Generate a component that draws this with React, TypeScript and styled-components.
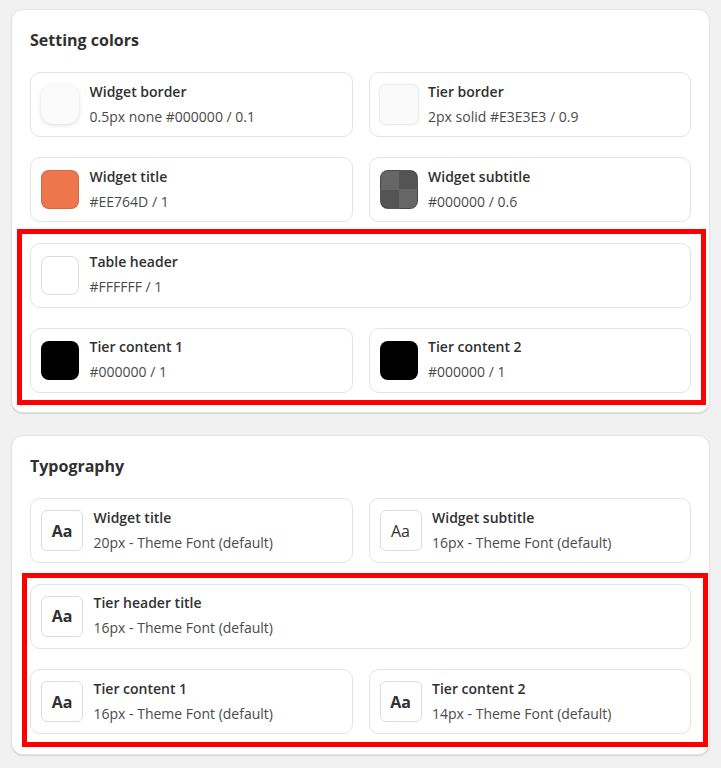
import React from "react";
import styled, { createGlobalStyle, css } from "styled-components";

const GlobalStyle = createGlobalStyle`
  html, body {
    margin: 0;
    padding: 0;
    background: #f1f1f1;
  }
  body {
    font-family: "Open Sans", "Noto Sans", "Liberation Sans", sans-serif;
    color: #303030;
    -webkit-font-smoothing: antialiased;
  }
`;

const Page = styled.div`
  display: flex;
  flex-direction: column;
  gap: 22px;
  padding: 9px 11px 15px;
`;

const Card = styled.section`
  position: relative;
  background: #ffffff;
  border: 1px solid #e3e3e3;
  border-radius: 12px;
  box-shadow: 0 1px 1px rgba(0, 0, 0, 0.12);
  padding: 18px 18px 19.5px;
`;

const CardTitle = styled.h2`
  margin: 0 0 20px;
  font-size: 16px;
  line-height: 24px;
  font-weight: 700;
  color: #303030;
`;

const Grid = styled.div`
  display: grid;
  grid-template-columns: 1fr 1fr;
  column-gap: 16px;
  row-gap: 20.33px;
`;

const Item = styled.div<{ $full?: boolean }>`
  grid-column: ${(p) => (p.$full ? "1 / -1" : "auto")};
  height: 65px;
  box-sizing: border-box;
  display: flex;
  align-items: center;
  gap: 10.5px;
  padding: 0 10px;
  border: 1px solid #e3e3e3;
  border-radius: 10px;
  background: #fff;
`;

type SwatchKind = "soft" | "ring" | "fill" | "checker" | "outline";

const Swatch = styled.div<{ $kind: SwatchKind; $color?: string }>`
  width: 38px;
  height: 39px;
  flex: none;
  box-sizing: border-box;
  border-radius: 8px;
  ${(p) =>
    p.$kind === "soft" &&
    css`
      border-radius: 12px;
      background: #fbfbfb;
      box-shadow: 0 1px 4px rgba(0, 0, 0, 0.14);
    `}
  ${(p) =>
    p.$kind === "ring" &&
    css`
      border-radius: 6px;
      background: #fafafa;
      box-shadow: 0 0 2px 1px rgba(0, 0, 0, 0.1);
    `}
  ${(p) =>
    p.$kind === "fill" &&
    css`
      background: ${p.$color};
      border: 1px solid rgba(0, 0, 0, 0.12);
    `}
  ${(p) =>
    p.$kind === "outline" &&
    css`
      background: ${p.$color};
      border: 1px solid #dcdcdc;
    `}
  ${(p) =>
    p.$kind === "checker" &&
    css`
      border: 1px solid rgba(0, 0, 0, 0.15);
      background: conic-gradient(
        #545454 0 25%,
        #666666 0 50%,
        #545454 0 75%,
        #666666 0 100%
      );
    `}
`;

const FontBox = styled.div<{ $bold: boolean }>`
  width: 42px;
  height: 41px;
  flex: none;
  box-sizing: border-box;
  border: 1px solid #dcdcdc;
  border-radius: 6px;
  display: flex;
  align-items: center;
  justify-content: center;
  font-size: 16px;
  font-weight: ${(p) => (p.$bold ? 700 : 400)};
  color: #303030;
`;

const Text = styled.div`
  display: flex;
  flex-direction: column;
  gap: 5px;
  margin-top: -1px;
  min-width: 0;
`;

const Label = styled.div`
  font-size: 14px;
  line-height: 20px;
  font-weight: 600;
  color: #303030;
  white-space: nowrap;
`;

const Value = styled.div`
  font-size: 14px;
  line-height: 20px;
  font-weight: 400;
  color: #4a4a4a;
  white-space: nowrap;
`;

const Highlight = styled.div<{ $top: number; $left: number; $right: number; $height: number }>`
  position: absolute;
  top: ${(p) => p.$top}px;
  left: ${(p) => p.$left}px;
  right: ${(p) => p.$right}px;
  height: ${(p) => p.$height}px;
  border: 5px solid #ff0000;
  box-sizing: border-box;
  pointer-events: none;
`;

const colors: {
  label: string;
  value: string;
  kind: SwatchKind;
  color?: string;
  full?: boolean;
}[] = [
  { label: "Widget border", value: "0.5px none #000000 / 0.1", kind: "soft" },
  { label: "Tier border", value: "2px solid #E3E3E3 / 0.9", kind: "ring" },
  { label: "Widget title", value: "#EE764D / 1", kind: "fill", color: "#EE764D" },
  { label: "Widget subtitle", value: "#000000 / 0.6", kind: "checker" },
  { label: "Table header", value: "#FFFFFF / 1", kind: "outline", color: "#FFFFFF", full: true },
  { label: "Tier content 1", value: "#000000 / 1", kind: "fill", color: "#000000" },
  { label: "Tier content 2", value: "#000000 / 1", kind: "fill", color: "#000000" },
];

const fonts: { label: string; value: string; bold: boolean; full?: boolean }[] = [
  { label: "Widget title", value: "20px - Theme Font (default)", bold: true },
  { label: "Widget subtitle", value: "16px - Theme Font (default)", bold: false },
  { label: "Tier header title", value: "16px - Theme Font (default)", bold: true, full: true },
  { label: "Tier content 1", value: "16px - Theme Font (default)", bold: true },
  { label: "Tier content 2", value: "14px - Theme Font (default)", bold: true },
];

export default function App() {
  return (
    <>
      <GlobalStyle />
      <Page>
        <Card>
          <CardTitle>Setting colors</CardTitle>
          <Grid>
            {colors.map((c) => (
              <Item key={c.label + c.value} $full={c.full}>
                <Swatch $kind={c.kind} $color={c.color} />
                <Text>
                  <Label>{c.label}</Label>
                  <Value>{c.value}</Value>
                </Text>
              </Item>
            ))}
          </Grid>
          <Highlight $top={219} $left={5} $right={3} $height={176} />
        </Card>
        <Card>
          <CardTitle>Typography</CardTitle>
          <Grid>
            {fonts.map((f) => (
              <Item key={f.label + f.value} $full={f.full}>
                <FontBox $bold={f.bold}>Aa</FontBox>
                <Text>
                  <Label>{f.label}</Label>
                  <Value>{f.value}</Value>
                </Text>
              </Item>
            ))}
          </Grid>
          <Highlight $top={137} $left={10} $right={1} $height={174} />
        </Card>
      </Page>
    </>
  );
}
